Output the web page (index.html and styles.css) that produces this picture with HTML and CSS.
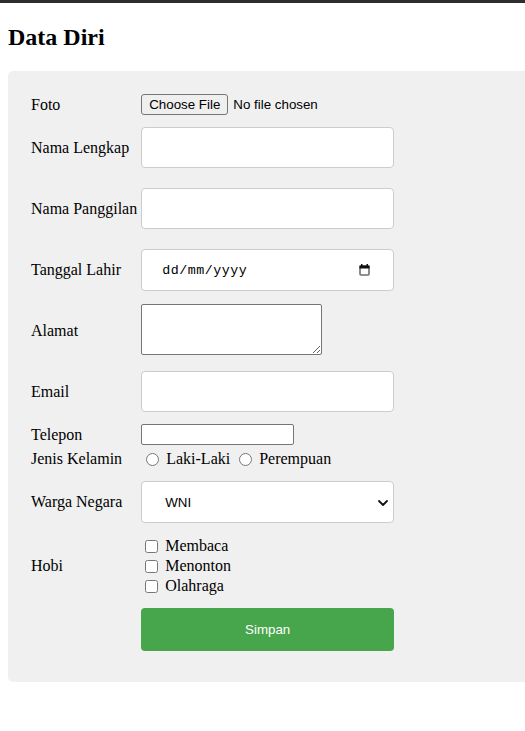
FILE: index.html
```html
<!DOCTYPE html>
<html lang="id">
<head>
<meta charset="utf-8">
<title>Data Diri</title>
<link rel="stylesheet" href="styles.css">
</head>
<body>
<div class="topbar"></div>
<div class="page">
  <h2 class="title">Data Diri</h2>
  <div class="panel">
    <form class="form">
      <table class="form-table">
        <tr>
          <td class="label-cell">Foto</td>
          <td class="field-cell">
            <div class="file-control">
              <button type="button" class="file-btn">Choose File</button>
              <span class="file-text">No file chosen</span>
            </div>
          </td>
        </tr>
        <tr>
          <td class="label-cell">Nama Lengkap</td>
          <td class="field-cell"><input type="text" class="text-input"></td>
        </tr>
        <tr>
          <td class="label-cell">Nama Panggilan</td>
          <td class="field-cell"><input type="text" class="text-input"></td>
        </tr>
        <tr>
          <td class="label-cell">Tanggal Lahir</td>
          <td class="field-cell">
            <div class="date-field">
              <span class="date-text">dd/mm/yyyy</span>
              <svg class="cal-icon" width="11" height="12" viewBox="0 0 11 12">
                <rect x="1" y="2" width="9" height="9" rx="1" fill="none" stroke="#6e6e6e" stroke-width="1.6"/>
                <rect x="0.5" y="1.5" width="10" height="3" fill="#111"/>
                <rect x="2" y="0" width="1.5" height="2" fill="#111"/>
                <rect x="7.5" y="0" width="1.5" height="2" fill="#111"/>
              </svg>
            </div>
          </td>
        </tr>
        <tr>
          <td class="label-cell">Alamat</td>
          <td class="field-cell"><textarea class="textarea"></textarea></td>
        </tr>
        <tr>
          <td class="label-cell">Email</td>
          <td class="field-cell"><input type="text" class="text-input"></td>
        </tr>
        <tr>
          <td class="label-cell">Telepon</td>
          <td class="field-cell"><input type="text" class="tel-input"></td>
        </tr>
        <tr>
          <td class="label-cell">Jenis Kelamin</td>
          <td class="field-cell">
            <div class="radio-group">
              <label class="choice"><input type="radio" name="jk" class="radio">Laki-Laki</label>
              <label class="choice"><input type="radio" name="jk" class="radio">Perempuan</label>
            </div>
          </td>
        </tr>
        <tr>
          <td class="label-cell">Warga Negara</td>
          <td class="field-cell">
            <div class="select-wrap">
              <select class="select">
                <option>WNI</option>
                <option>WNA</option>
              </select>
              <svg class="chevron" width="10" height="6" viewBox="0 0 10 6">
                <path d="M1 1 L5 5 L9 1" fill="none" stroke="#111" stroke-width="1.8" stroke-linecap="round" stroke-linejoin="round"/>
              </svg>
            </div>
          </td>
        </tr>
        <tr>
          <td class="label-cell">Hobi</td>
          <td class="field-cell">
            <div class="check-group">
              <label class="check-line"><input type="checkbox" class="checkbox">Membaca</label>
              <label class="check-line"><input type="checkbox" class="checkbox">Menonton</label>
              <label class="check-line"><input type="checkbox" class="checkbox">Olahraga</label>
            </div>
          </td>
        </tr>
        <tr>
          <td class="label-cell"></td>
          <td class="field-cell"><button type="button" class="submit">Simpan</button></td>
        </tr>
      </table>
    </form>
  </div>
</div>
</body>
</html>
```

FILE: styles.css
```css
html, body {
  margin: 0;
  padding: 0;
}

body {
  font-family: "Liberation Serif", "Times New Roman", serif;
  font-size: 16px;
  color: #000;
  background: #fff;
}

.topbar {
  height: 3px;
  background: #2e2e2e;
}

.page {
  padding: 0 8px;
}

.title {
  margin: 20px 0;
  font-size: 24px;
  line-height: 28px;
  font-weight: bold;
}

.panel {
  margin-right: -8px;
  padding: 20px;
  background: #f0f0f0;
  border-radius: 5px 0 0 5px;
}

.form {
  margin: 0;
}

.form-table {
  border-collapse: separate;
  border-spacing: 2px;
}

.label-cell,
.field-cell {
  padding: 1px;
  vertical-align: middle;
}

.label-cell {
  width: 106px;
  white-space: nowrap;
}

.file-control {
  display: flex;
  align-items: center;
  gap: 5px;
  height: 21px;
}

.file-btn {
  height: 21px;
  box-sizing: border-box;
  padding: 0 7px;
  margin: 0;
  border: 1px solid #767676;
  border-radius: 3px;
  background: #efefef;
  color: #000;
  font-family: "Liberation Sans", Arial, sans-serif;
  font-size: 13.33px;
}

.file-text {
  font-family: "Liberation Sans", Arial, sans-serif;
  font-size: 13.33px;
}

.text-input {
  display: block;
  width: 253px;
  height: 41px;
  box-sizing: border-box;
  margin: 8px 0;
  padding: 12px 20px;
  border: 1px solid #ccc;
  border-radius: 4px;
  background: #fff;
  font-family: "Liberation Sans", Arial, sans-serif;
  font-size: 13.33px;
}

.date-field {
  display: flex;
  align-items: center;
  justify-content: space-between;
  width: 253px;
  height: 42px;
  box-sizing: border-box;
  margin: 8px 0;
  padding: 0 23px 0 20px;
  border: 1px solid #ccc;
  border-radius: 4px;
  background: #fff;
}

.date-text {
  font-family: "Liberation Mono", "Courier New", monospace;
  font-size: 13.33px;
  letter-spacing: 0.5px;
  color: #000;
}

.cal-icon {
  display: block;
}

.textarea {
  display: block;
  width: 181px;
  height: 51px;
  box-sizing: border-box;
  margin: 1px 0 4px;
  padding: 2px;
  border: 1px solid #767676;
  border-radius: 2px;
  background: #fff;
  font-family: "Liberation Mono", monospace;
  font-size: 13.33px;
  resize: both;
}

.tel-input {
  display: block;
  width: 153px;
  height: 21px;
  box-sizing: border-box;
  margin: 0;
  padding: 1px 2px;
  border: 1px solid #767676;
  border-radius: 2px;
  background: #fff;
  font-family: "Liberation Sans", Arial, sans-serif;
  font-size: 13.33px;
}

.radio-group {
  display: flex;
  align-items: center;
  gap: 4px;
  height: 20px;
}

.choice {
  display: inline-flex;
  align-items: center;
  gap: 4px;
}

.radio {
  width: 13px;
  height: 13px;
  margin: 0 3px 0 5px;
}

.select-wrap {
  position: relative;
  width: 253px;
  margin: 8px 0;
}

.select {
  display: block;
  width: 100%;
  height: 42px;
  box-sizing: border-box;
  margin: 0;
  padding: 0 20px 0 23px;
  border: 1px solid #ccc;
  border-radius: 4px;
  background: #fff;
  color: #000;
  font-family: "Liberation Sans", Arial, sans-serif;
  font-size: 13.33px;
  appearance: none;
  -webkit-appearance: none;
}

.chevron {
  position: absolute;
  top: 19px;
  right: 6px;
  pointer-events: none;
}

.check-group {
  padding-top: 1px;
}

.check-line {
  display: flex;
  align-items: center;
  gap: 4px;
  height: 20px;
}

.checkbox {
  width: 13px;
  height: 13px;
  margin: 0 3px 0 4px;
}

.submit {
  display: block;
  width: 253px;
  height: 43px;
  margin: 8px 0;
  padding: 0 20px;
  border: none;
  border-radius: 4px;
  background: #47a54b;
  color: #fff;
  font-family: "Liberation Sans", Arial, sans-serif;
  font-size: 13.33px;
}
```
